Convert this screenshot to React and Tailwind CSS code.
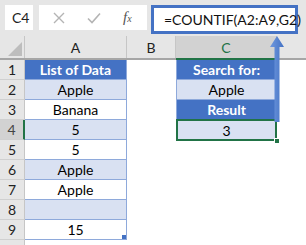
export default function App() {
  const rows = [
    { n: 1, a: "List of Data", aType: "head", c: "Search for:", cType: "head" },
    { n: 2, a: "Apple", aType: "light", c: "Apple", cType: "light" },
    { n: 3, a: "Banana", aType: "white", c: "Result", cType: "head" },
    { n: 4, a: "5", aType: "light", c: "3", cType: "sel" },
    { n: 5, a: "5", aType: "white" },
    { n: 6, a: "Apple", aType: "light" },
    { n: 7, a: "Apple", aType: "white" },
    { n: 8, a: "", aType: "light" },
    { n: 9, a: "15", aType: "white" },
  ];
  const cellCls = (t) =>
    t === "head"
      ? "bg-[#4472c4] text-white font-bold"
      : t === "light" || t === "sel"
      ? "bg-[#d9e1f2] text-black"
      : "bg-white text-black";
  return (
    <div
      className="relative w-[306px] h-[245px] overflow-hidden bg-white"
      style={{ fontFamily: "Lato, 'Noto Sans', sans-serif" }}
    >
      {/* toolbar */}
      <div className="h-[36px] bg-[#e6e6e6] flex items-start pt-[5px] pl-[5px]">
        <div className="w-[28px] h-[25px] bg-white flex items-center pl-[7px] text-[14px] text-[#222]">
          C4
        </div>
        <div className="ml-[6px] w-[108px] h-[25px] bg-white flex items-center text-[#b9b9b9]">
          <svg width="12" height="12" viewBox="0 0 12 12" className="ml-[14px]">
            <path d="M1 1 L11 11 M11 1 L1 11" stroke="#b4b4b4" strokeWidth="1.4" />
          </svg>
          <svg width="14" height="12" viewBox="0 0 14 12" className="ml-[22px]">
            <path d="M1 6.5 L5 10.5 L13 1.5" stroke="#b4b4b4" strokeWidth="1.6" fill="none" />
          </svg>
          <span
            className="ml-[22px] text-[15px] italic text-[#555]"
            style={{ fontFamily: "'Liberation Serif', serif" }}
          >
            f<span className="text-[10px]">x</span>
          </span>
        </div>
        <div className="ml-[4px] w-[147px] h-[29px] bg-white border-[3px] border-[#4472c4] flex items-center pl-[10px] text-[14px] text-[#111]">
          =COUNTIF(A2:A9,G2)
        </div>
      </div>

      {/* header row */}
      <div className="flex h-[24px] bg-[#e6e6e6] border-b-2 border-[#a6a6a6]">
        <div className="w-[25px] border-r border-[#c6c6c6] flex items-end justify-end pr-[2px] pb-[2px]">
          <svg width="14" height="14" viewBox="0 0 14 14">
            <path d="M14 0 L14 14 L0 14 Z" fill="#bdbdbd" />
          </svg>
        </div>
        <div className="w-[102px] border-r border-[#c6c6c6] flex items-center justify-center text-[14px] text-[#222]">
          A
        </div>
        <div className="w-[49px] border-r border-[#c6c6c6] flex items-center justify-center text-[14px] text-[#222]">
          B
        </div>
        <div className="relative w-[101px] bg-[#d2d2d2] border-r border-[#c6c6c6] flex items-center justify-center text-[14px] text-[#217346]">
          C
          <div className="absolute left-0 right-0 bottom-[-2px] h-[2px] bg-[#217346]" />
        </div>
        <div className="flex-1" />
      </div>

      {/* body */}
      {rows.map((r) => (
        <div key={r.n} className="flex h-[20px]">
          <div
            className={`w-[25px] flex items-center justify-center text-[14px] border-b border-[#d0d0d0] ${
              r.n === 4
                ? "bg-[#d2d2d2] text-[#444] border-r-2 border-r-[#217346]"
                : "bg-[#e6e6e6] text-[#222] border-r border-r-[#c6c6c6]"
            }`}
          >
            {r.n}
          </div>
          <div
            className={`relative w-[102px] flex items-center justify-center text-[14px] border-b border-r border-[#8ea9db] ${cellCls(
              r.aType
            )}`}
          >
            {r.a}
            {r.n === 9 && (
              <div className="absolute right-0 bottom-0 w-[4px] h-[4px] bg-[#4472c4]" />
            )}
          </div>
          <div className="w-[49px] bg-white" />
          {r.c ? (
            <div
              className={`relative w-[101px] flex items-center justify-center text-[14px] ${
                r.cType === "sel"
                  ? "border-2 border-[#217346] -mt-[1px] h-[22px]"
                  : "border-l border-r border-b border-[#8ea9db]"
              } ${cellCls(r.cType)}`}
            >
              {r.c}
              {r.cType === "sel" && (
                <div className="absolute right-[-5px] bottom-[-5px] w-[6px] h-[6px] bg-[#217346] border border-white" />
              )}
            </div>
          ) : (
            <div className="w-[101px]" />
          )}
          <div className="flex-1" />
        </div>
      ))}
      <div className="flex h-[10px]">
        <div className="w-[25px] bg-[#e6e6e6] border-r border-[#c6c6c6]" />
      </div>

      {/* arrow */}
      <svg
        className="absolute left-[269px] top-[35px]"
        width="16"
        height="90"
        viewBox="0 0 16 90"
      >
        <defs>
          <linearGradient id="g" x1="0" x2="1" y1="0" y2="0">
            <stop offset="0" stopColor="#6f98de" />
            <stop offset="1" stopColor="#4472c4" />
          </linearGradient>
        </defs>
        <path d="M8 1 L15 12 L10.5 12 L10.5 87 L5.5 87 L5.5 12 L1 12 Z" fill="url(#g)" />
      </svg>
    </div>
  );
}
